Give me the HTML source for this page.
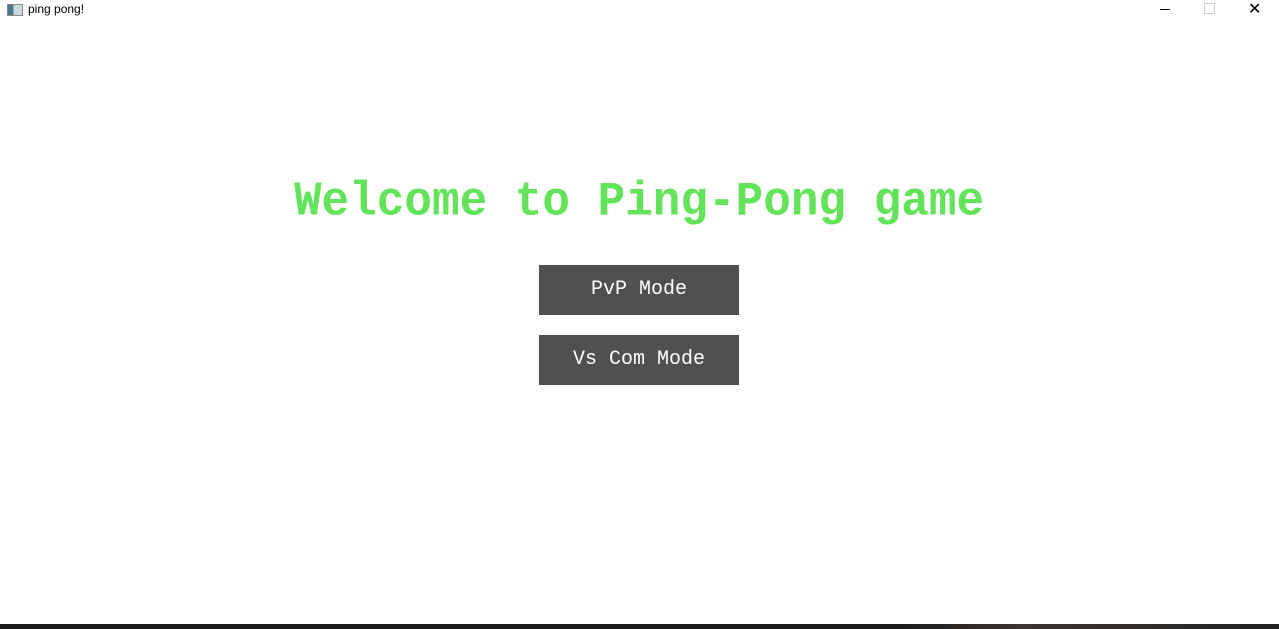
<!DOCTYPE html>
<html><head><style>
html,body{margin:0;padding:0;width:1279px;height:629px;background:#fff;overflow:hidden;position:relative;font-family:"Liberation Sans",sans-serif}
.t{position:absolute;left:28px;top:2px;font-size:12px;color:#000}
.ic{position:absolute;left:7px;top:4px;width:14px;height:10px;border:1px solid #888;background:linear-gradient(90deg,#4a7a8a 40%,#cfd8dc 40%)}
.title{position:absolute;left:293px;top:176px;width:692px;text-align:center;font-family:"Liberation Mono",monospace;font-weight:bold;font-size:46px;color:#63e35a;white-space:nowrap;transform:scaleY(1.05)}
.btn{position:absolute;left:539px;width:200px;height:50px;background:#505050;color:#fff;font-family:"Liberation Mono",monospace;font-size:20px;line-height:50px;text-align:center}
.bar{position:absolute;left:0;top:624px;width:1279px;height:5px;background:linear-gradient(90deg,#1a1a1a 70%,#3a3530 80%,#222 100%)}
</style></head><body>
<div class="ic"></div><div class="t">ping pong!</div>
<div style="position:absolute;left:1160px;top:9px;width:10px;height:1px;background:#000"></div>
<div style="position:absolute;left:1204px;top:3px;width:9px;height:9px;border:1px solid #ccc"></div>
<div style="position:absolute;left:1248px;top:-1px;font-size:16px;color:#000">✕</div>
<div class="title">Welcome to Ping-Pong game</div>
<div class="btn" style="top:265px">PvP Mode</div>
<div class="btn" style="top:335px">Vs Com Mode</div>
<div class="bar"></div>
</body></html>
